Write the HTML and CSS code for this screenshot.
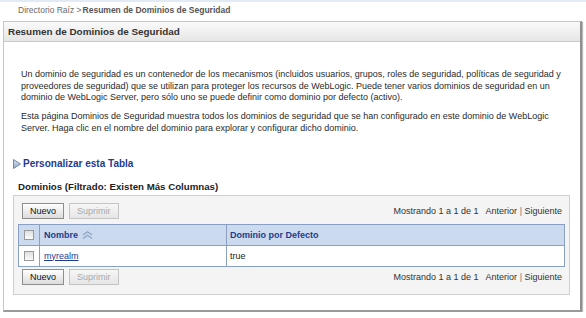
FILE: index.html
```html
<!DOCTYPE html>
<html lang="es">
<head>
<meta charset="utf-8">
<title>Resumen de Dominios de Seguridad</title>
<link rel="stylesheet" href="styles.css">
</head>
<body>
<div class="topline"></div>
<div class="breadcrumb"><span class="crumb">Directorio Raíz &gt;</span><span class="crumb-current">Resumen de Dominios de Seguridad</span></div>
<div class="panel">
  <div class="panel-header">Resumen de Dominios de Seguridad</div>
  <div class="panel-body">
    <p class="intro">Un dominio de seguridad es un contenedor de los mecanismos (incluidos usuarios, grupos, roles de seguridad, políticas de seguridad y proveedores de seguridad) que se utilizan para proteger los recursos de WebLogic. Puede tener varios dominios de seguridad en un dominio de WebLogic Server, pero sólo uno se puede definir como dominio por defecto (activo).</p>
    <p class="intro">Esta página Dominios de Seguridad muestra todos los dominios de seguridad que se han configurado en este dominio de WebLogic Server. Haga clic en el nombre del dominio para explorar y configurar dicho dominio.</p>
    <div class="customize">
      <svg class="tri" width="8" height="10" viewBox="0 0 8 10"><defs><linearGradient id="g" x1="0" y1="0" x2="0" y2="1"><stop offset="0" stop-color="#dfe8f5"/><stop offset="1" stop-color="#8fa6c6"/></linearGradient></defs><polygon points="0.5,0.5 7.5,5 0.5,9.5" fill="url(#g)" stroke="#6f86a8" stroke-width="1"/></svg>
      <a class="customize-link" href="#">Personalizar esta Tabla</a>
    </div>
    <div class="table-title">Dominios (Filtrado: Existen Más Columnas)</div>
    <div class="table-box">
      <div class="controls">
        <div class="buttons"><button class="btn">Nuevo</button><button class="btn disabled">Suprimir</button></div>
        <div class="pager">Mostrando 1 a 1 de 1&nbsp;&nbsp; Anterior <span class="sep">|</span> Siguiente</div>
      </div>
      <table class="grid">
        <thead>
          <tr><th class="cb"><span class="check"></span></th><th class="name">Nombre <svg class="sort" width="11" height="8" viewBox="0 0 11 8"><polyline points="1,4 5.5,0.8 10,4" fill="none" stroke="#8ea2c4" stroke-width="1.2"/><polyline points="1,7.5 5.5,4.3 10,7.5" fill="none" stroke="#8ea2c4" stroke-width="1.2"/></svg></th><th>Dominio por Defecto</th></tr>
        </thead>
        <tbody>
          <tr><td class="cb"><span class="check"></span></td><td class="name"><a href="#" class="realm">myrealm</a></td><td>true</td></tr>
        </tbody>
      </table>
      <div class="controls bottom">
        <div class="buttons"><button class="btn">Nuevo</button><button class="btn disabled">Suprimir</button></div>
        <div class="pager">Mostrando 1 a 1 de 1&nbsp;&nbsp; Anterior <span class="sep">|</span> Siguiente</div>
      </div>
    </div>
  </div>
</div>
</body>
</html>
```
FILE: styles.css
```css
* { box-sizing: border-box; }
body {
  margin: 0;
  background: #fff;
  font-family: "Liberation Sans", Arial, sans-serif;
  font-size: 9px;
  color: #222;
}
.topline { height: 2px; background: #e2eaf6; }
.breadcrumb {
  height: 19px;
  padding: 3px 0 0 18px;
  color: #6a6a6a;
  font-size: 8.5px;
}
.crumb-current { font-weight: bold; color: #555; margin-left: 1px; }
.panel {
  margin: 0 4px 0 3px;
  height: 291px;
  border: 1px solid #c6c6c6;
  border-right: 2px solid #8f8f8f;
  border-bottom: 2px solid #9a9a9a;
  box-shadow: 1px 1px 1px #bbb;
}
.panel-header {
  height: 20px;
  padding: 4px 0 0 4px;
  font-weight: bold;
  font-size: 9.9px;
  color: #333;
  background: linear-gradient(#fafafa, #e6e6e6);
  border-bottom: 1px solid #c8c8c8;
}
.panel-body { padding: 27px 10px 0 9px; }
.intro {
  margin: 0 0 7px 8px;
  line-height: 11.7px;
  color: #2a2a2a;
}
.customize {
  display: flex;
  align-items: center;
  gap: 2px;
  margin-top: 22px;
  height: 14px;
}
.customize-link {
  color: #1d3c8f;
  font-weight: bold;
  font-size: 10px;
  text-decoration: none;
}
.table-title {
  margin: 10px 0 0 5px;
  font-weight: bold;
  font-size: 9.7px;
  color: #222;
  height: 14px;
}
.table-box {
  margin-top: 0;
  border: 1px solid #cfcfcf;
  background: #f4f4f4;
  padding: 7px 4px 9px 4px;
}
.controls {
  display: flex;
  justify-content: space-between;
  align-items: center;
  height: 16px;
  padding: 0 3px 0 4px;
}
.controls.bottom { margin-top: 2px; }
.buttons { display: flex; gap: 5px; }
.btn {
  font-family: inherit;
  font-size: 9px;
  height: 16px;
  padding: 0 7px;
  border: 1px solid #8e8e8e;
  background: linear-gradient(#ffffff, #dcdcdc);
  color: #111;
}
.btn.disabled { color: #a9a9a9; border-color: #c4c4c4; background: linear-gradient(#f6f6f6, #e6e6e6); }
.pager { color: #333; }
.sep { color: #777; }
.grid {
  margin-top: 5px;
  width: 100%;
  border-collapse: collapse;
  background: #fff;
}
.grid th, .grid td {
  border: 1px solid #8aa0c2;
  text-align: left;
  padding: 0 0 0 3px;
}
.grid th {
  height: 21px;
  background: #cbdaee;
  color: #1d3c8f;
  font-weight: bold;
}
.grid td { height: 21px; color: #222; }
.grid .cb { width: 21px; padding: 0; text-align: center; }
.grid .name { width: 187px; padding-left: 4px; }
.check {
  display: inline-block;
  width: 10px;
  height: 10px;
  border: 1px solid #9a9a9a;
  background: linear-gradient(#e0e0e0, #fafafa);
  vertical-align: middle;
}
.sort { vertical-align: middle; margin-left: 1px; }
.realm { color: #1d3c8f; }
```
